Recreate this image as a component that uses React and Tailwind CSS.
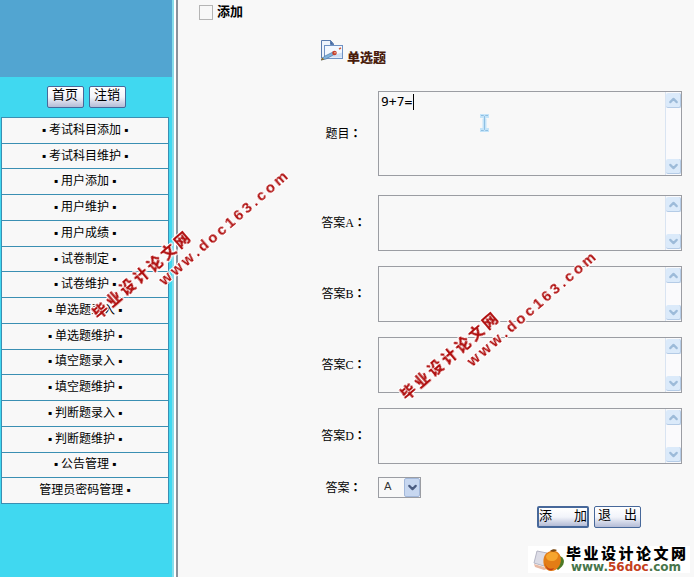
import { useState } from "react";
import { ChevronUp, ChevronDown } from "lucide-react";

const menuItems = [
  "▪ 考试科目添加 ▪",
  "▪ 考试科目维护 ▪",
  "▪ 用户添加 ▪",
  "▪ 用户维护 ▪",
  "▪ 用户成绩 ▪",
  "▪ 试卷制定 ▪",
  "▪ 试卷维护 ▪",
  "▪ 单选题录入 ▪",
  "▪ 单选题维护 ▪",
  "▪ 填空题录入 ▪",
  "▪ 填空题维护 ▪",
  "▪ 判断题录入 ▪",
  "▪ 判断题维护 ▪",
  "▪ 公告管理 ▪",
  "管理员密码管理 ▪",
];

const options = ["A", "B", "C", "D"];

function XpButton({ children, className }) {
  return (
    <button
      type="button"
      className={`flex h-[22px] items-start rounded-[2px] border-[#47689a] bg-linear-to-b from-white via-[#f2f4fa] to-[#b4bcd6] text-[13px] text-black ${className}`}
    >
      {children}
    </button>
  );
}

function ScrollBar() {
  const arrow =
    "flex h-[15px] w-[15px] items-center justify-center rounded-[2px] border-r border-b border-[#b4cbe6] bg-[#dbeafa] text-[#9dbbd9]";
  return (
    <div className="flex w-4 shrink-0 flex-col justify-between border-l border-[#d9e4f2] bg-[#fafafc] py-px">
      <button type="button" aria-label="向上滚动" className={arrow}>
        <ChevronUp size={13} strokeWidth={4} />
      </button>
      <button type="button" aria-label="向下滚动" className={arrow}>
        <ChevronDown size={13} strokeWidth={4} />
      </button>
    </div>
  );
}

function Label({ htmlFor, text }) {
  return (
    <label
      htmlFor={htmlFor}
      className="w-[70px] shrink-0 pb-px pl-px text-center text-xs"
    >
      {text}
      <span className="font-['Noto_Sans_CJK_TC',sans-serif] font-bold">：</span>
    </label>
  );
}

function TextField({ id, label, value, onChange, className, children }) {
  return (
    <div className="flex items-center">
      <Label htmlFor={id} text={label} />
      <div
        className={`relative flex min-w-0 flex-1 border border-[#9b9da3] bg-[#f8f8f8] ${className}`}
      >
        <textarea
          id={id}
          value={value}
          onChange={(e) => onChange(e.target.value)}
          className="min-w-0 flex-1 resize-none overflow-hidden px-[2px] py-[2px] font-['DejaVu_Sans_Mono',monospace] text-[13px] leading-4 outline-none"
        />
        <ScrollBar />
        {children}
      </div>
    </div>
  );
}

function Watermark({ className }) {
  return (
    <div
      aria-hidden="true"
      className={`pointer-events-none absolute w-[243px] -rotate-41 text-[15px] leading-[17px] text-[#b01010] [filter:drop-shadow(1px_0_#fff)_drop-shadow(-1px_0_#fff)_drop-shadow(0_1px_#fff)_drop-shadow(0_-1px_#fff)] ${className}`}
    >
      <div className="flex gap-[3px] font-black">
        {[..."毕业设计论文网"].map((c, idx) => (
          <span key={idx}>{c}</span>
        ))}
      </div>
      <div className="flex gap-[3px] pl-[72px] font-['Liberation_Sans',sans-serif] font-bold">
        {[..."www.doc163.com"].map((c, idx) => (
          <span key={idx}>{c}</span>
        ))}
      </div>
    </div>
  );
}

function TitleIcon() {
  return (
    <svg width="24" height="22" viewBox="0 0 24 22" fill="none">
      <path d="M1.500 18V.5h9l3 3.500v5H5v9z" fill="#eef4fc" stroke="#5b7cae" />
      <path d="M10.500 .5V4.500h3z" fill="#3f66a6" stroke="#5b7cae" />
      <rect x="4.500" y="5.500" width="18" height="13" fill="#f3f8ff" stroke="#6f92c4" />
      <path d="M6 17.500h16v-5z" fill="#cfe0f5" />
      <path d="M1 20l3-3.500 9-4.500 2 2-9 5z" fill="#7fb2dc" stroke="#4d79a8" strokeWidth=".7" />
      <path d="M1 20.500l1-3 2.500 2z" fill="#8a6a2c" />
      <circle cx="14.500" cy="13" r="2.300" fill="#c5402c" />
      <circle cx="15" cy="12.700" r=".8" fill="#f4c3a8" />
      <path d="M19 9l2-1" stroke="#d2603c" strokeWidth="1.500" />
    </svg>
  );
}

function SiteLogo() {
  return (
    <div className="flex items-center bg-white pr-1 pl-1">
      <svg width="34" height="26" viewBox="0 0 34 26" fill="none">
        <path d="M5 4l10 2-3 13-10-3z" fill="#dcdce6" stroke="#b5b5c4" />
        <path d="M2 17l10 3 3 2-3 1-9-3z" fill="#e8b9a4" />
        <path d="M28 9c6 3 5 9-2 14l-4-3z" fill="#4d7a26" />
        <path d="M12 10c2-7 13-9 16-2 3 8-2 16-9 16-6 0-9-7-7-14z" fill="#e37d16" />
        <path d="M14 9c3-5 10-5 12-1 0 4-3 6-6 6s-6-1-6-5z" fill="#f6a52e" />
        <path d="M13 16c1 5 5 7 9 5-2 4-8 3-9-5z" fill="#c23b16" />
        <path d="M18 4c2-2 5-2 7-1-2 2-4 2-7 1z" fill="#7b4a12" />
      </svg>
      <div className="w-[120px]">
        <div className="flex justify-between text-[15px] leading-4 font-black">
          {[..."毕业设计论文网"].map((c, idx) => (
            <span key={idx}>{c}</span>
          ))}
        </div>
        <p className="text-center font-['DejaVu_Sans',sans-serif] text-xs leading-[11px] font-bold text-[#47764c]">
          www.<span className="text-[#c4401c]">56doc</span>.com
        </p>
      </div>
    </div>
  );
}

export default function App() {
  const [question, setQuestion] = useState("9+7=");
  const [answers, setAnswers] = useState({ A: "", B: "", C: "", D: "" });
  const [correct, setCorrect] = useState("A");

  return (
    <div className="relative flex min-h-screen bg-[#f8f8f8] font-['Liberation_Serif','Noto_Sans_CJK_SC',sans-serif] text-black">
      <aside className="w-[174px] shrink-0 border-r-2 border-[#86dcea] bg-[#40d8f0]">
        <div className="h-[77px] bg-[#52a5d1]" />
        <div className="flex justify-center gap-[5px] pt-[9px] pb-[9px]">
          <XpButton className="w-[37px] justify-center border leading-4">
            首页
          </XpButton>
          <XpButton className="w-[37px] justify-center border leading-4">
            注销
          </XpButton>
        </div>
        <nav className="pr-[3px] pl-px">
          <ul className="grid h-[387px] auto-rows-fr border border-b-0 border-[#3a8fb3] bg-[#f8f8f8]">
            {menuItems.map((item) => (
              <li
                key={item}
                className="flex items-center justify-center border-b border-[#3a8fb3] pb-px"
              >
                <a href="#" className="text-xs leading-4">
                  {item}
                </a>
              </li>
            ))}
          </ul>
        </nav>
      </aside>
      <div className="w-1 shrink-0 border-r-2 border-[#8b919b] bg-white" />

      <main className="min-w-0 flex-1">
        <div className="flex items-center gap-1 pt-1 pl-[21px]">
          <input
            id="add"
            type="checkbox"
            className="h-[15px] w-[14px] appearance-none border border-[#b5b5b5] bg-[#f8f8f8] checked:bg-[#47689a]"
          />
          <label htmlFor="add" className="text-[13px] leading-4 font-bold">
            添加
          </label>
        </div>

        <form className="pr-3 pl-[130px]">
          <div className="flex items-end gap-[3px] pt-5 pl-3">
            <TitleIcon />
            <h1 className="translate-y-1 text-[13px] leading-4 font-black text-[#4a1c0c]">
              单选题
            </h1>
          </div>

          <div className="mt-[29px] flex flex-col gap-[15px]">
            <div className="pb-1">
              <TextField
                id="question"
                label="题目"
                value={question}
                onChange={setQuestion}
                className="h-[85px]"
              >
                {question === "9+7=" && (
                  <span className="absolute top-[2px] left-[34px] h-4 w-px bg-black" />
                )}
                <svg
                  className="pointer-events-none absolute top-[22px] left-[100px]"
                  width="11"
                  height="18"
                  viewBox="0 0 11 18"
                  fill="none"
                >
                  <path
                    d="M1 2h3l1.500 1L7 2h3M5.500 2.500v13M1 16h3l1.500-1L7 16h3"
                    stroke="#c4e4f9"
                    strokeWidth="4"
                  />
                  <path
                    d="M2 1.500h2.500l1 1 1-1H9M5.500 2.500v13M2 16.500h2.500l1-1 1 1H9"
                    stroke="#8fbfe2"
                  />
                </svg>
              </TextField>
            </div>

            {options.map((opt) => (
              <TextField
                key={opt}
                id={`answer-${opt}`}
                label={`答案${opt}`}
                value={answers[opt]}
                onChange={(v) => setAnswers((prev) => ({ ...prev, [opt]: v }))}
                className="h-14"
              />
            ))}
          </div>

          <div className="mt-[13px] flex items-center">
            <Label htmlFor="correct" text="答案" />
            <div className="relative">
              <select
                id="correct"
                value={correct}
                onChange={(e) => setCorrect(e.target.value)}
                className="block h-[21px] w-[43px] appearance-none border border-[#9b9da3] bg-[#f8f8f8] pl-[5px] font-['DejaVu_Sans',sans-serif] text-[11px] text-[#333]"
              >
                {options.map((opt) => (
                  <option key={opt}>{opt}</option>
                ))}
              </select>
              <span className="pointer-events-none absolute top-px right-px flex h-[19px] w-4 items-center justify-center rounded-[2px] border border-[#a3b8da] bg-[#c7d7f0] text-[#4a5c80]">
                <ChevronDown size={13} strokeWidth={4} />
              </span>
            </div>
          </div>

          <div className="mt-2 flex justify-end gap-[5px] pr-[41px]">
            <XpButton className="w-[52px] justify-between border-2 leading-[15px]">
              <span>添</span>
              <span>加</span>
            </XpButton>
            <XpButton className="w-[47px] justify-between border px-[3px] leading-4">
              <span>退</span>
              <span>出</span>
            </XpButton>
          </div>
        </form>

        <footer className="mt-[18px] flex justify-end pr-1">
          <SiteLogo />
        </footer>
      </main>

      <Watermark className="top-[226px] left-[71px]" />
      <Watermark className="top-[307px] left-[379px]" />
    </div>
  );
}
